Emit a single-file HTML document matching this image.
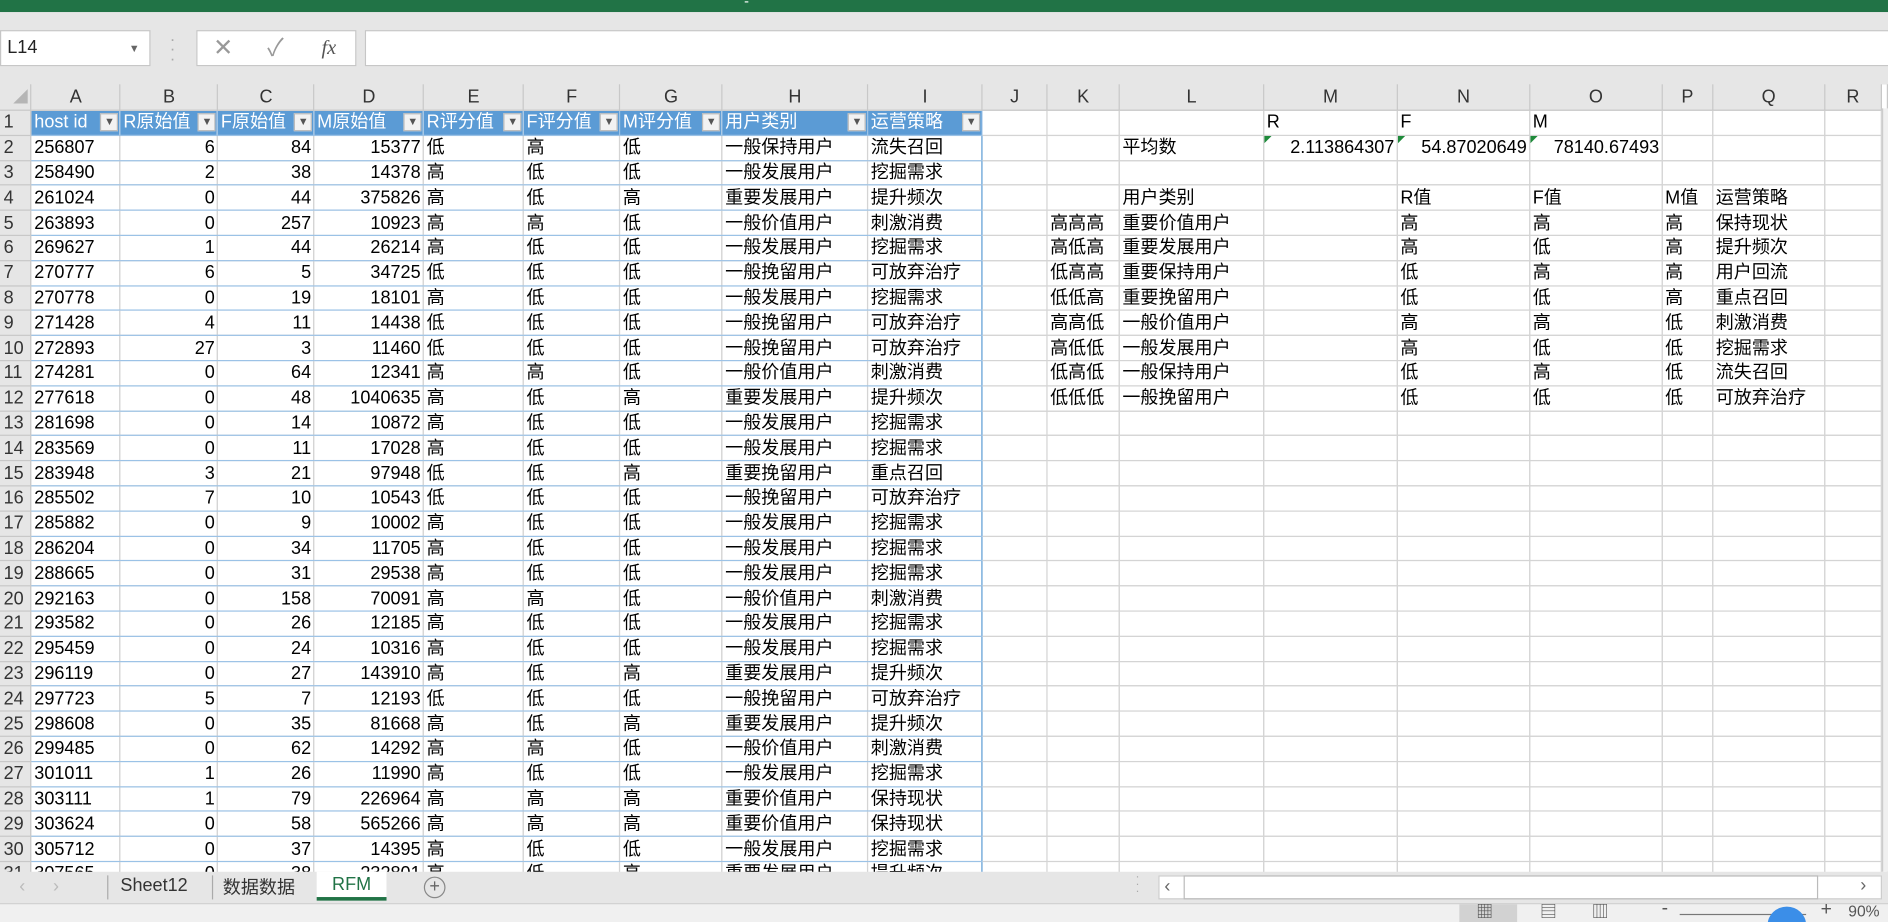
<!DOCTYPE html>
<html><head><meta charset="utf-8"><style>
*{margin:0;padding:0;box-sizing:border-box}
html,body{width:1888px;height:922px;overflow:hidden;background:#fff}
#w{position:absolute;left:0;top:0;width:1568px;height:766px;transform:scale(1.20408);transform-origin:0 0;font-family:"Liberation Sans","Noto Sans CJK SC",sans-serif;background:#e6e6e6;overflow:hidden}
.abs{position:absolute}
#title{left:0;top:0;width:1568px;height:10px;background:#217346}
#nb{left:0;top:25px;width:125px;height:30px;background:#fff;border:1px solid #c6c6c6;font-size:15px;line-height:28px;padding-left:5px;color:#222}
#fxb{left:163px;top:25px;width:133px;height:30px;background:#fff;border:1px solid #c6c6c6;color:#999;font-size:20px;line-height:28px}
#fi{left:303px;top:25px;width:1270px;height:30px;background:#fff;border:1px solid #c6c6c6}
table{position:absolute;left:0;top:70px;border-collapse:collapse;table-layout:fixed;font-size:15px;color:#000}
td{height:20.8px;border-right:1px solid #d4d4d4;border-bottom:1px solid #d4d4d4;white-space:nowrap;overflow:hidden;padding:0 2px;line-height:19px;background:#fff}
tr.h td{height:20px;background:#e6e6e6;text-align:center;color:#333;border-color:#c8c8c8;font-size:15px}
td.rh{background:#e6e6e6;color:#333;text-align:left;padding-left:3px;border-color:#c8c8c8}
.r{text-align:right}
.t{border-bottom:1px solid #9bc2e6}
tr.th td.t{background:#5b9bd5;color:#fff;position:relative;border-color:#9bc2e6}
.fb{position:absolute;right:1px;top:2px;width:15px;height:15px;background:#f2f2f2;border:1px solid #bbb;color:#555;font-size:9px;line-height:13px;text-align:center}
.bl{border-left:1px solid #5b9bd5}
.br{border-right:1px solid #5b9bd5}
.g{position:relative}
.g:before{content:"";position:absolute;left:0;top:0;border-top:6px solid #1e8a3a;border-right:6px solid transparent}
#tabs{left:0;top:724px;width:1568px;height:26px;background:#e6e6e6;font-size:15px;color:#333}
#st{left:0;top:750px;width:1568px;height:16px;background:#f0f0f0;border-top:1px solid #d0d0d0}
</style></head><body><div id="w">
<div class="abs" id="title"></div>
<div class="abs" style="left:618px;top:-6px;color:#fff;font-size:12px">-</div>
<div class="abs" id="nb">L14<span style="position:absolute;right:8px;top:0;font-size:9px;color:#666">▼</span></div>
<div class="abs" style="left:141px;top:28px;color:#aaa;font-size:14px;line-height:8px">·<br>·<br>·</div>
<div class="abs" id="fxb"><span style="position:absolute;left:13px">✕</span><span style="position:absolute;left:58px">✓</span><span style="position:absolute;left:103px;font-family:'Liberation Serif',serif;font-style:italic;color:#555;font-size:17px">fx</span></div>
<div class="abs" id="fi"></div>
<table>
<colgroup><col style="width:26px"><col style="width:74px"><col style="width:81px"><col style="width:80px"><col style="width:91px"><col style="width:83px"><col style="width:80px"><col style="width:85px"><col style="width:121px"><col style="width:95px"><col style="width:54px"><col style="width:60px"><col style="width:120px"><col style="width:111px"><col style="width:110px"><col style="width:110px"><col style="width:42px"><col style="width:93px"><col style="width:47px"><col style="width:5px"></colgroup>
<tr class="h"><td style="background:#e6e6e6"><span style="display:inline-block;border-bottom:12px solid #b5b5b5;border-left:12px solid transparent;margin-left:8px;margin-top:4px"></span></td><td>A</td><td>B</td><td>C</td><td>D</td><td>E</td><td>F</td><td>G</td><td>H</td><td>I</td><td>J</td><td>K</td><td>L</td><td>M</td><td>N</td><td>O</td><td>P</td><td>Q</td><td>R</td><td style="background:#fff"></td></tr>
<tr class="th"><td class="rh">1</td><td class="t bl">host id<span class="fb">▼</span></td><td class="t">R原始值<span class="fb">▼</span></td><td class="t">F原始值<span class="fb">▼</span></td><td class="t">M原始值<span class="fb">▼</span></td><td class="t">R评分值<span class="fb">▼</span></td><td class="t">F评分值<span class="fb">▼</span></td><td class="t">M评分值<span class="fb">▼</span></td><td class="t">用户类别<span class="fb">▼</span></td><td class="t br">运营策略<span class="fb">▼</span></td><td></td><td></td><td></td><td>R</td><td>F</td><td>M</td><td></td><td></td><td></td><td></td></tr>
<tr><td class="rh">2</td><td class="t bl">256807</td><td class="t r">6</td><td class="t r">84</td><td class="t r">15377</td><td class="t">低</td><td class="t">高</td><td class="t">低</td><td class="t">一般保持用户</td><td class="t br">流失召回</td><td></td><td></td><td>平均数</td><td class="g r">2.113864307</td><td class="g r">54.87020649</td><td class="g r">78140.67493</td><td></td><td></td><td></td><td></td></tr>
<tr><td class="rh">3</td><td class="t bl">258490</td><td class="t r">2</td><td class="t r">38</td><td class="t r">14378</td><td class="t">高</td><td class="t">低</td><td class="t">低</td><td class="t">一般发展用户</td><td class="t br">挖掘需求</td><td></td><td></td><td></td><td></td><td></td><td></td><td></td><td></td><td></td><td></td></tr>
<tr><td class="rh">4</td><td class="t bl">261024</td><td class="t r">0</td><td class="t r">44</td><td class="t r">375826</td><td class="t">高</td><td class="t">低</td><td class="t">高</td><td class="t">重要发展用户</td><td class="t br">提升频次</td><td></td><td></td><td>用户类别</td><td></td><td>R值</td><td>F值</td><td>M值</td><td>运营策略</td><td></td><td></td></tr>
<tr><td class="rh">5</td><td class="t bl">263893</td><td class="t r">0</td><td class="t r">257</td><td class="t r">10923</td><td class="t">高</td><td class="t">高</td><td class="t">低</td><td class="t">一般价值用户</td><td class="t br">刺激消费</td><td></td><td>高高高</td><td>重要价值用户</td><td></td><td>高</td><td>高</td><td>高</td><td>保持现状</td><td></td><td></td></tr>
<tr><td class="rh">6</td><td class="t bl">269627</td><td class="t r">1</td><td class="t r">44</td><td class="t r">26214</td><td class="t">高</td><td class="t">低</td><td class="t">低</td><td class="t">一般发展用户</td><td class="t br">挖掘需求</td><td></td><td>高低高</td><td>重要发展用户</td><td></td><td>高</td><td>低</td><td>高</td><td>提升频次</td><td></td><td></td></tr>
<tr><td class="rh">7</td><td class="t bl">270777</td><td class="t r">6</td><td class="t r">5</td><td class="t r">34725</td><td class="t">低</td><td class="t">低</td><td class="t">低</td><td class="t">一般挽留用户</td><td class="t br">可放弃治疗</td><td></td><td>低高高</td><td>重要保持用户</td><td></td><td>低</td><td>高</td><td>高</td><td>用户回流</td><td></td><td></td></tr>
<tr><td class="rh">8</td><td class="t bl">270778</td><td class="t r">0</td><td class="t r">19</td><td class="t r">18101</td><td class="t">高</td><td class="t">低</td><td class="t">低</td><td class="t">一般发展用户</td><td class="t br">挖掘需求</td><td></td><td>低低高</td><td>重要挽留用户</td><td></td><td>低</td><td>低</td><td>高</td><td>重点召回</td><td></td><td></td></tr>
<tr><td class="rh">9</td><td class="t bl">271428</td><td class="t r">4</td><td class="t r">11</td><td class="t r">14438</td><td class="t">低</td><td class="t">低</td><td class="t">低</td><td class="t">一般挽留用户</td><td class="t br">可放弃治疗</td><td></td><td>高高低</td><td>一般价值用户</td><td></td><td>高</td><td>高</td><td>低</td><td>刺激消费</td><td></td><td></td></tr>
<tr><td class="rh">10</td><td class="t bl">272893</td><td class="t r">27</td><td class="t r">3</td><td class="t r">11460</td><td class="t">低</td><td class="t">低</td><td class="t">低</td><td class="t">一般挽留用户</td><td class="t br">可放弃治疗</td><td></td><td>高低低</td><td>一般发展用户</td><td></td><td>高</td><td>低</td><td>低</td><td>挖掘需求</td><td></td><td></td></tr>
<tr><td class="rh">11</td><td class="t bl">274281</td><td class="t r">0</td><td class="t r">64</td><td class="t r">12341</td><td class="t">高</td><td class="t">高</td><td class="t">低</td><td class="t">一般价值用户</td><td class="t br">刺激消费</td><td></td><td>低高低</td><td>一般保持用户</td><td></td><td>低</td><td>高</td><td>低</td><td>流失召回</td><td></td><td></td></tr>
<tr><td class="rh">12</td><td class="t bl">277618</td><td class="t r">0</td><td class="t r">48</td><td class="t r">1040635</td><td class="t">高</td><td class="t">低</td><td class="t">高</td><td class="t">重要发展用户</td><td class="t br">提升频次</td><td></td><td>低低低</td><td>一般挽留用户</td><td></td><td>低</td><td>低</td><td>低</td><td>可放弃治疗</td><td></td><td></td></tr>
<tr><td class="rh">13</td><td class="t bl">281698</td><td class="t r">0</td><td class="t r">14</td><td class="t r">10872</td><td class="t">高</td><td class="t">低</td><td class="t">低</td><td class="t">一般发展用户</td><td class="t br">挖掘需求</td><td></td><td></td><td></td><td></td><td></td><td></td><td></td><td></td><td></td><td></td></tr>
<tr><td class="rh">14</td><td class="t bl">283569</td><td class="t r">0</td><td class="t r">11</td><td class="t r">17028</td><td class="t">高</td><td class="t">低</td><td class="t">低</td><td class="t">一般发展用户</td><td class="t br">挖掘需求</td><td></td><td></td><td></td><td></td><td></td><td></td><td></td><td></td><td></td><td></td></tr>
<tr><td class="rh">15</td><td class="t bl">283948</td><td class="t r">3</td><td class="t r">21</td><td class="t r">97948</td><td class="t">低</td><td class="t">低</td><td class="t">高</td><td class="t">重要挽留用户</td><td class="t br">重点召回</td><td></td><td></td><td></td><td></td><td></td><td></td><td></td><td></td><td></td><td></td></tr>
<tr><td class="rh">16</td><td class="t bl">285502</td><td class="t r">7</td><td class="t r">10</td><td class="t r">10543</td><td class="t">低</td><td class="t">低</td><td class="t">低</td><td class="t">一般挽留用户</td><td class="t br">可放弃治疗</td><td></td><td></td><td></td><td></td><td></td><td></td><td></td><td></td><td></td><td></td></tr>
<tr><td class="rh">17</td><td class="t bl">285882</td><td class="t r">0</td><td class="t r">9</td><td class="t r">10002</td><td class="t">高</td><td class="t">低</td><td class="t">低</td><td class="t">一般发展用户</td><td class="t br">挖掘需求</td><td></td><td></td><td></td><td></td><td></td><td></td><td></td><td></td><td></td><td></td></tr>
<tr><td class="rh">18</td><td class="t bl">286204</td><td class="t r">0</td><td class="t r">34</td><td class="t r">11705</td><td class="t">高</td><td class="t">低</td><td class="t">低</td><td class="t">一般发展用户</td><td class="t br">挖掘需求</td><td></td><td></td><td></td><td></td><td></td><td></td><td></td><td></td><td></td><td></td></tr>
<tr><td class="rh">19</td><td class="t bl">288665</td><td class="t r">0</td><td class="t r">31</td><td class="t r">29538</td><td class="t">高</td><td class="t">低</td><td class="t">低</td><td class="t">一般发展用户</td><td class="t br">挖掘需求</td><td></td><td></td><td></td><td></td><td></td><td></td><td></td><td></td><td></td><td></td></tr>
<tr><td class="rh">20</td><td class="t bl">292163</td><td class="t r">0</td><td class="t r">158</td><td class="t r">70091</td><td class="t">高</td><td class="t">高</td><td class="t">低</td><td class="t">一般价值用户</td><td class="t br">刺激消费</td><td></td><td></td><td></td><td></td><td></td><td></td><td></td><td></td><td></td><td></td></tr>
<tr><td class="rh">21</td><td class="t bl">293582</td><td class="t r">0</td><td class="t r">26</td><td class="t r">12185</td><td class="t">高</td><td class="t">低</td><td class="t">低</td><td class="t">一般发展用户</td><td class="t br">挖掘需求</td><td></td><td></td><td></td><td></td><td></td><td></td><td></td><td></td><td></td><td></td></tr>
<tr><td class="rh">22</td><td class="t bl">295459</td><td class="t r">0</td><td class="t r">24</td><td class="t r">10316</td><td class="t">高</td><td class="t">低</td><td class="t">低</td><td class="t">一般发展用户</td><td class="t br">挖掘需求</td><td></td><td></td><td></td><td></td><td></td><td></td><td></td><td></td><td></td><td></td></tr>
<tr><td class="rh">23</td><td class="t bl">296119</td><td class="t r">0</td><td class="t r">27</td><td class="t r">143910</td><td class="t">高</td><td class="t">低</td><td class="t">高</td><td class="t">重要发展用户</td><td class="t br">提升频次</td><td></td><td></td><td></td><td></td><td></td><td></td><td></td><td></td><td></td><td></td></tr>
<tr><td class="rh">24</td><td class="t bl">297723</td><td class="t r">5</td><td class="t r">7</td><td class="t r">12193</td><td class="t">低</td><td class="t">低</td><td class="t">低</td><td class="t">一般挽留用户</td><td class="t br">可放弃治疗</td><td></td><td></td><td></td><td></td><td></td><td></td><td></td><td></td><td></td><td></td></tr>
<tr><td class="rh">25</td><td class="t bl">298608</td><td class="t r">0</td><td class="t r">35</td><td class="t r">81668</td><td class="t">高</td><td class="t">低</td><td class="t">高</td><td class="t">重要发展用户</td><td class="t br">提升频次</td><td></td><td></td><td></td><td></td><td></td><td></td><td></td><td></td><td></td><td></td></tr>
<tr><td class="rh">26</td><td class="t bl">299485</td><td class="t r">0</td><td class="t r">62</td><td class="t r">14292</td><td class="t">高</td><td class="t">高</td><td class="t">低</td><td class="t">一般价值用户</td><td class="t br">刺激消费</td><td></td><td></td><td></td><td></td><td></td><td></td><td></td><td></td><td></td><td></td></tr>
<tr><td class="rh">27</td><td class="t bl">301011</td><td class="t r">1</td><td class="t r">26</td><td class="t r">11990</td><td class="t">高</td><td class="t">低</td><td class="t">低</td><td class="t">一般发展用户</td><td class="t br">挖掘需求</td><td></td><td></td><td></td><td></td><td></td><td></td><td></td><td></td><td></td><td></td></tr>
<tr><td class="rh">28</td><td class="t bl">303111</td><td class="t r">1</td><td class="t r">79</td><td class="t r">226964</td><td class="t">高</td><td class="t">高</td><td class="t">高</td><td class="t">重要价值用户</td><td class="t br">保持现状</td><td></td><td></td><td></td><td></td><td></td><td></td><td></td><td></td><td></td><td></td></tr>
<tr><td class="rh">29</td><td class="t bl">303624</td><td class="t r">0</td><td class="t r">58</td><td class="t r">565266</td><td class="t">高</td><td class="t">高</td><td class="t">高</td><td class="t">重要价值用户</td><td class="t br">保持现状</td><td></td><td></td><td></td><td></td><td></td><td></td><td></td><td></td><td></td><td></td></tr>
<tr><td class="rh">30</td><td class="t bl">305712</td><td class="t r">0</td><td class="t r">37</td><td class="t r">14395</td><td class="t">高</td><td class="t">低</td><td class="t">低</td><td class="t">一般发展用户</td><td class="t br">挖掘需求</td><td></td><td></td><td></td><td></td><td></td><td></td><td></td><td></td><td></td><td></td></tr>
<tr><td class="rh">31</td><td class="t bl">307565</td><td class="t r">0</td><td class="t r">38</td><td class="t r">232801</td><td class="t">高</td><td class="t">低</td><td class="t">高</td><td class="t">重要发展用户</td><td class="t br">提升频次</td><td></td><td></td><td></td><td></td><td></td><td></td><td></td><td></td><td></td><td></td></tr>
</table>
<div class="abs" style="left:1563px;top:90px;width:5px;height:634px;background:#f0f0f0;border-left:1px solid #ccc"></div>
<div class="abs" id="tabs">
<span class="abs" style="left:16px;top:4px;color:#bbb">‹</span><span class="abs" style="left:44px;top:4px;color:#bbb">›</span>
<div class="abs" style="left:89px;top:3px;height:20px;border-left:1px solid #aaa"></div>
<span class="abs" style="left:100px;top:3px">Sheet12</span>
<div class="abs" style="left:176px;top:3px;height:20px;border-left:1px solid #aaa"></div>
<span class="abs" style="left:185px;top:2px">数据数据</span>
<div class="abs" style="left:263px;top:0;width:58px;height:24px;background:#fff;color:#217346;text-align:center;line-height:22px;border-bottom:3px solid #217346">RFM</div>
<div class="abs" style="left:352px;top:4px;width:18px;height:18px;border:1px solid #888;border-radius:50%;text-align:center;line-height:15px;color:#666">+</div>
<span class="abs" style="left:943px;top:2px;color:#aaa;font-size:10px;line-height:6px">·<br>·<br>·</span>
<div class="abs" style="left:962px;top:3px;width:601px;height:20px;background:#fff;border:1px solid #ccc"><span class="abs" style="left:4px;top:0;color:#666">‹</span><div class="abs" style="left:20px;top:-1px;width:527px;height:20px;border:1px solid #bbb"></div></div>
<span class="abs" style="left:1545px;top:3px;color:#666">›</span>
</div>
<div class="abs" id="st">
<div class="abs" style="left:1212px;top:0;width:48px;height:16px;background:#d2d2d2"></div>
<span class="abs" style="left:1226px;top:-4px;color:#555;font-size:14px">▦</span>
<span class="abs" style="left:1279px;top:-4px;color:#555;font-size:14px">▤</span>
<span class="abs" style="left:1322px;top:-4px;color:#555;font-size:14px">▥</span>
<span class="abs" style="left:1380px;top:-5px;color:#555">-</span>
<div class="abs" style="left:1395px;top:8px;width:105px;height:1px;background:#777"></div>
<div class="abs" style="left:1468px;top:2px;width:32px;height:30px;border-radius:50%;background:#3b8ee8"></div>
<span class="abs" style="left:1512px;top:-4px;color:#555">+</span>
<span class="abs" style="left:1535px;top:-2px;color:#555;font-size:13px">90%</span>
</div>
</div></body></html>
